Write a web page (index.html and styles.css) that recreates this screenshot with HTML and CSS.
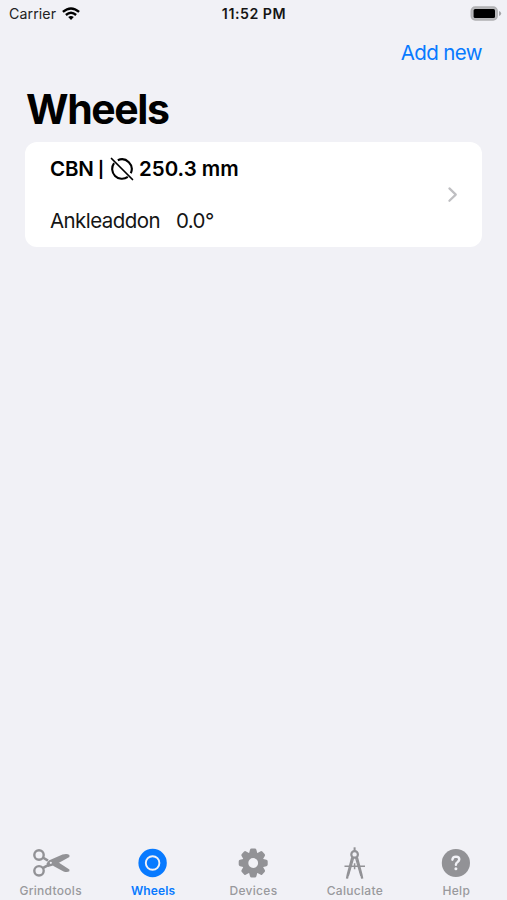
FILE: index.html
```html
<!DOCTYPE html>
<html lang="en">
<head>
<meta charset="utf-8">
<title>Wheels</title>
<link rel="stylesheet" href="styles.css">
</head>
<body>
<div class="app">
  <header class="status">
    <div class="carrier"><span>Carrier</span>
      <svg width="18" height="14" viewBox="0 0 18 14" fill="none" stroke="#000" stroke-width="2.4"><path d="M.9 4.9Q9-2 17.1 4.9M3.9 8Q9 3.6 14.1 8"/><path d="M9 13 6.2 10.1Q9 8 11.8 10.1Z" fill="#000" stroke="none"/></svg>
    </div>
    <div class="time">11:52 PM</div>
    <svg class="battery" width="32" height="16" viewBox="0 0 32 16"><rect x="1.2" y="1" width="26" height="13" rx="4" fill="#b8b8bb" stroke="#b0b0b3" stroke-width="1.4"/><rect x="3.6" y="3" width="21.4" height="9" rx="1.5" fill="#000"/><path d="M29 4.9Q31.2 5.8 31.2 7.5T29 10.1Z" fill="#a5a5a8"/></svg>
  </header>
  <nav class="actions"><a class="add">Add new</a></nav>
  <main>
    <h1><span>Wheels</span></h1>
    <section class="card">
      <div class="info">
        <div class="title"><span class="kind">CBN</span><span class="bar">|</span>
          <svg width="24" height="24" viewBox="0 0 24 24" fill="none" stroke="#000" stroke-width="2.1"><path d="M7.8 3.2A9.8 9.8 0 0 1 20.8 16.2M4.1 6.2A9.8 9.8 0 0 0 17.8 19.9"/><path d="M1.5 1.5 22.5 22.5" stroke-width="1.7" stroke-linecap="round"/></svg>
          <span class="size">250.3 mm</span></div>
        <div class="detail"><span class="name">Ankleaddon</span><span class="angle">0.0°</span></div>
      </div>
      <svg class="chevron" width="12" height="18" viewBox="0 0 12 18" fill="none" stroke="#bfbfc2" stroke-width="2.2" stroke-linecap="round" stroke-linejoin="round"><path d="M2.4 2.4 8.8 8.6 2.4 14.8"/></svg>
    </section>
  </main>
  <footer class="tabs">
    <div class="tab">
      <svg width="44" height="34" viewBox="0 0 44 34"><g fill="none" stroke="#929296" stroke-width="2.4"><circle cx="10" cy="9" r="4.7"/><circle cx="10" cy="24.8" r="4.7"/><path d="M13.8 11.5 19 14.6M13.8 22.2 20 18.7" stroke-width="2.6"/></g><path fill="#929296" d="M17.5 17.4 19.8 14.4 33.5 8.6Q38 7.2 40.4 9V11L26 18.9 19 21ZM24 19.8 30 16.8 40.4 23.6V25.3Q38 26.8 34.6 25.4Z"/><circle cx="21.8" cy="16.8" r="1.1" fill="#f1f1f6"/></svg>
      <span class="label">Grindtools</span>
    </div>
    <div class="tab active">
      <svg width="44" height="34" viewBox="0 0 44 34"><circle cx="22.6" cy="17" r="14.2" fill="#087aff"/><circle cx="22.6" cy="17" r="6.8" fill="none" stroke="#f1f1f6" stroke-width="1.9"/></svg>
      <span class="label">Wheels</span>
    </div>
    <div class="tab">
      <svg width="44" height="34" viewBox="0 0 44 34"><defs><path id="tooth" d="M17.9 8 19 3.8Q19.3 2.5 20.6 2.5H23.8Q25.1 2.5 25.4 3.8L26.5 8Z"/></defs><g fill="#929296"><use href="#tooth"/><use href="#tooth" transform="rotate(45 22.2 17)"/><use href="#tooth" transform="rotate(90 22.2 17)"/><use href="#tooth" transform="rotate(135 22.2 17)"/><use href="#tooth" transform="rotate(180 22.2 17)"/><use href="#tooth" transform="rotate(225 22.2 17)"/><use href="#tooth" transform="rotate(270 22.2 17)"/><use href="#tooth" transform="rotate(315 22.2 17)"/></g><circle cx="22.2" cy="17" r="7.8" fill="none" stroke="#929296" stroke-width="5.8"/></svg>
      <span class="label">Devices</span>
    </div>
    <div class="tab">
      <svg width="44" height="34" viewBox="0 0 44 34" fill="none" stroke="#929296" stroke-width="1.5"><path d="M21.6 1.3V5" stroke-width="2"/><circle cx="21.6" cy="8.4" r="3.3" stroke-width="2.2"/><path d="M11.5 20.2H32M21.6 17.2V23.2"/><path stroke-width="2.3" d="M19.3 11.3 14.8 28.5 14 32.6M23.9 11.3 28.4 28.5 29.2 32.6"/><path stroke-width="1.2" d="M20.6 12 15.4 29.8M22.6 12 27.8 29.8"/></svg>
      <span class="label">Caluclate</span>
    </div>
    <div class="tab">
      <svg width="44" height="34" viewBox="0 0 44 34"><circle cx="21.9" cy="17" r="14.1" fill="#929296"/><path d="M18.4 13.7Q18.6 10.6 22 10.6 25.3 10.7 25.3 13.3 25.3 14.8 23.6 16 21.9 17 21.9 18.8" fill="none" stroke="#f1f1f6" stroke-width="2.4" stroke-linecap="round"/><circle cx="21.9" cy="22.7" r="1.5" fill="#f1f1f6"/></svg>
      <span class="label">Help</span>
    </div>
  </footer>
</div>
</body>
</html>
```
FILE: styles.css
```css
* { box-sizing: border-box; }
body { margin: 0; background: #f1f1f6; color: #000; font-family: Inter, "Liberation Sans", sans-serif; }
svg { display: block; flex: none; }
span { white-space: nowrap; }
.app { height: 900px; display: flex; flex-direction: column; }
.status { height: 28px; display: grid; grid-template-columns: 1fr auto 1fr; align-items: center; padding: 0 5px 1px 9px; }
.carrier { display: flex; align-items: center; gap: 6px; font-size: 14.2px; letter-spacing: .08px; color: #222; }
.time { font-size: 14.2px; font-weight: 600; letter-spacing: .52px; margin-right: 3px; color: #151515; }
.battery { justify-self: end; }
.actions { height: 50px; display: flex; justify-content: flex-end; padding: 12px 25px 0 0; }
.add { font-size: 20.5px; line-height: 26px; letter-spacing: -.6px; color: #087aff; }
main { flex: 1; padding: 6px 25px 0; }
h1 { margin: 0 0 7px 1px; font-size: 41px; line-height: 51px; font-weight: 700; letter-spacing: -1.4px; }
.card { height: 105px; background: #fff; border-radius: 12px; display: flex; justify-content: space-between; align-items: center; padding: 0 23px 0 25px; }
.info { display: flex; flex-direction: column; gap: 26px; }
.title { display: flex; align-items: center; height: 26px; font-size: 20.5px; font-weight: 600; }
.title svg { margin: 0 5px 0 0; }
.kind { width: 48px; letter-spacing: -.2px; }
.bar { width: 12px; font-size: 16px; font-weight: 700; line-height: 20px; padding: 1px 0 0; }
.detail { display: flex; gap: 16px; height: 26px; line-height: 26px; font-size: 20.5px; letter-spacing: -.57px; color: #151515; }
.tabs { height: 54px; display: grid; grid-template-columns: repeat(5, 1fr); }
.tab { display: flex; flex-direction: column; align-items: center; color: #99999d; }
.label { font-size: 12px; line-height: 16px; margin-top: 3px; font-weight: 500; letter-spacing: .3px; }
.active { color: #087aff; }
.active .label { font-weight: 600; letter-spacing: .15px; padding-left: 2px; }
```
